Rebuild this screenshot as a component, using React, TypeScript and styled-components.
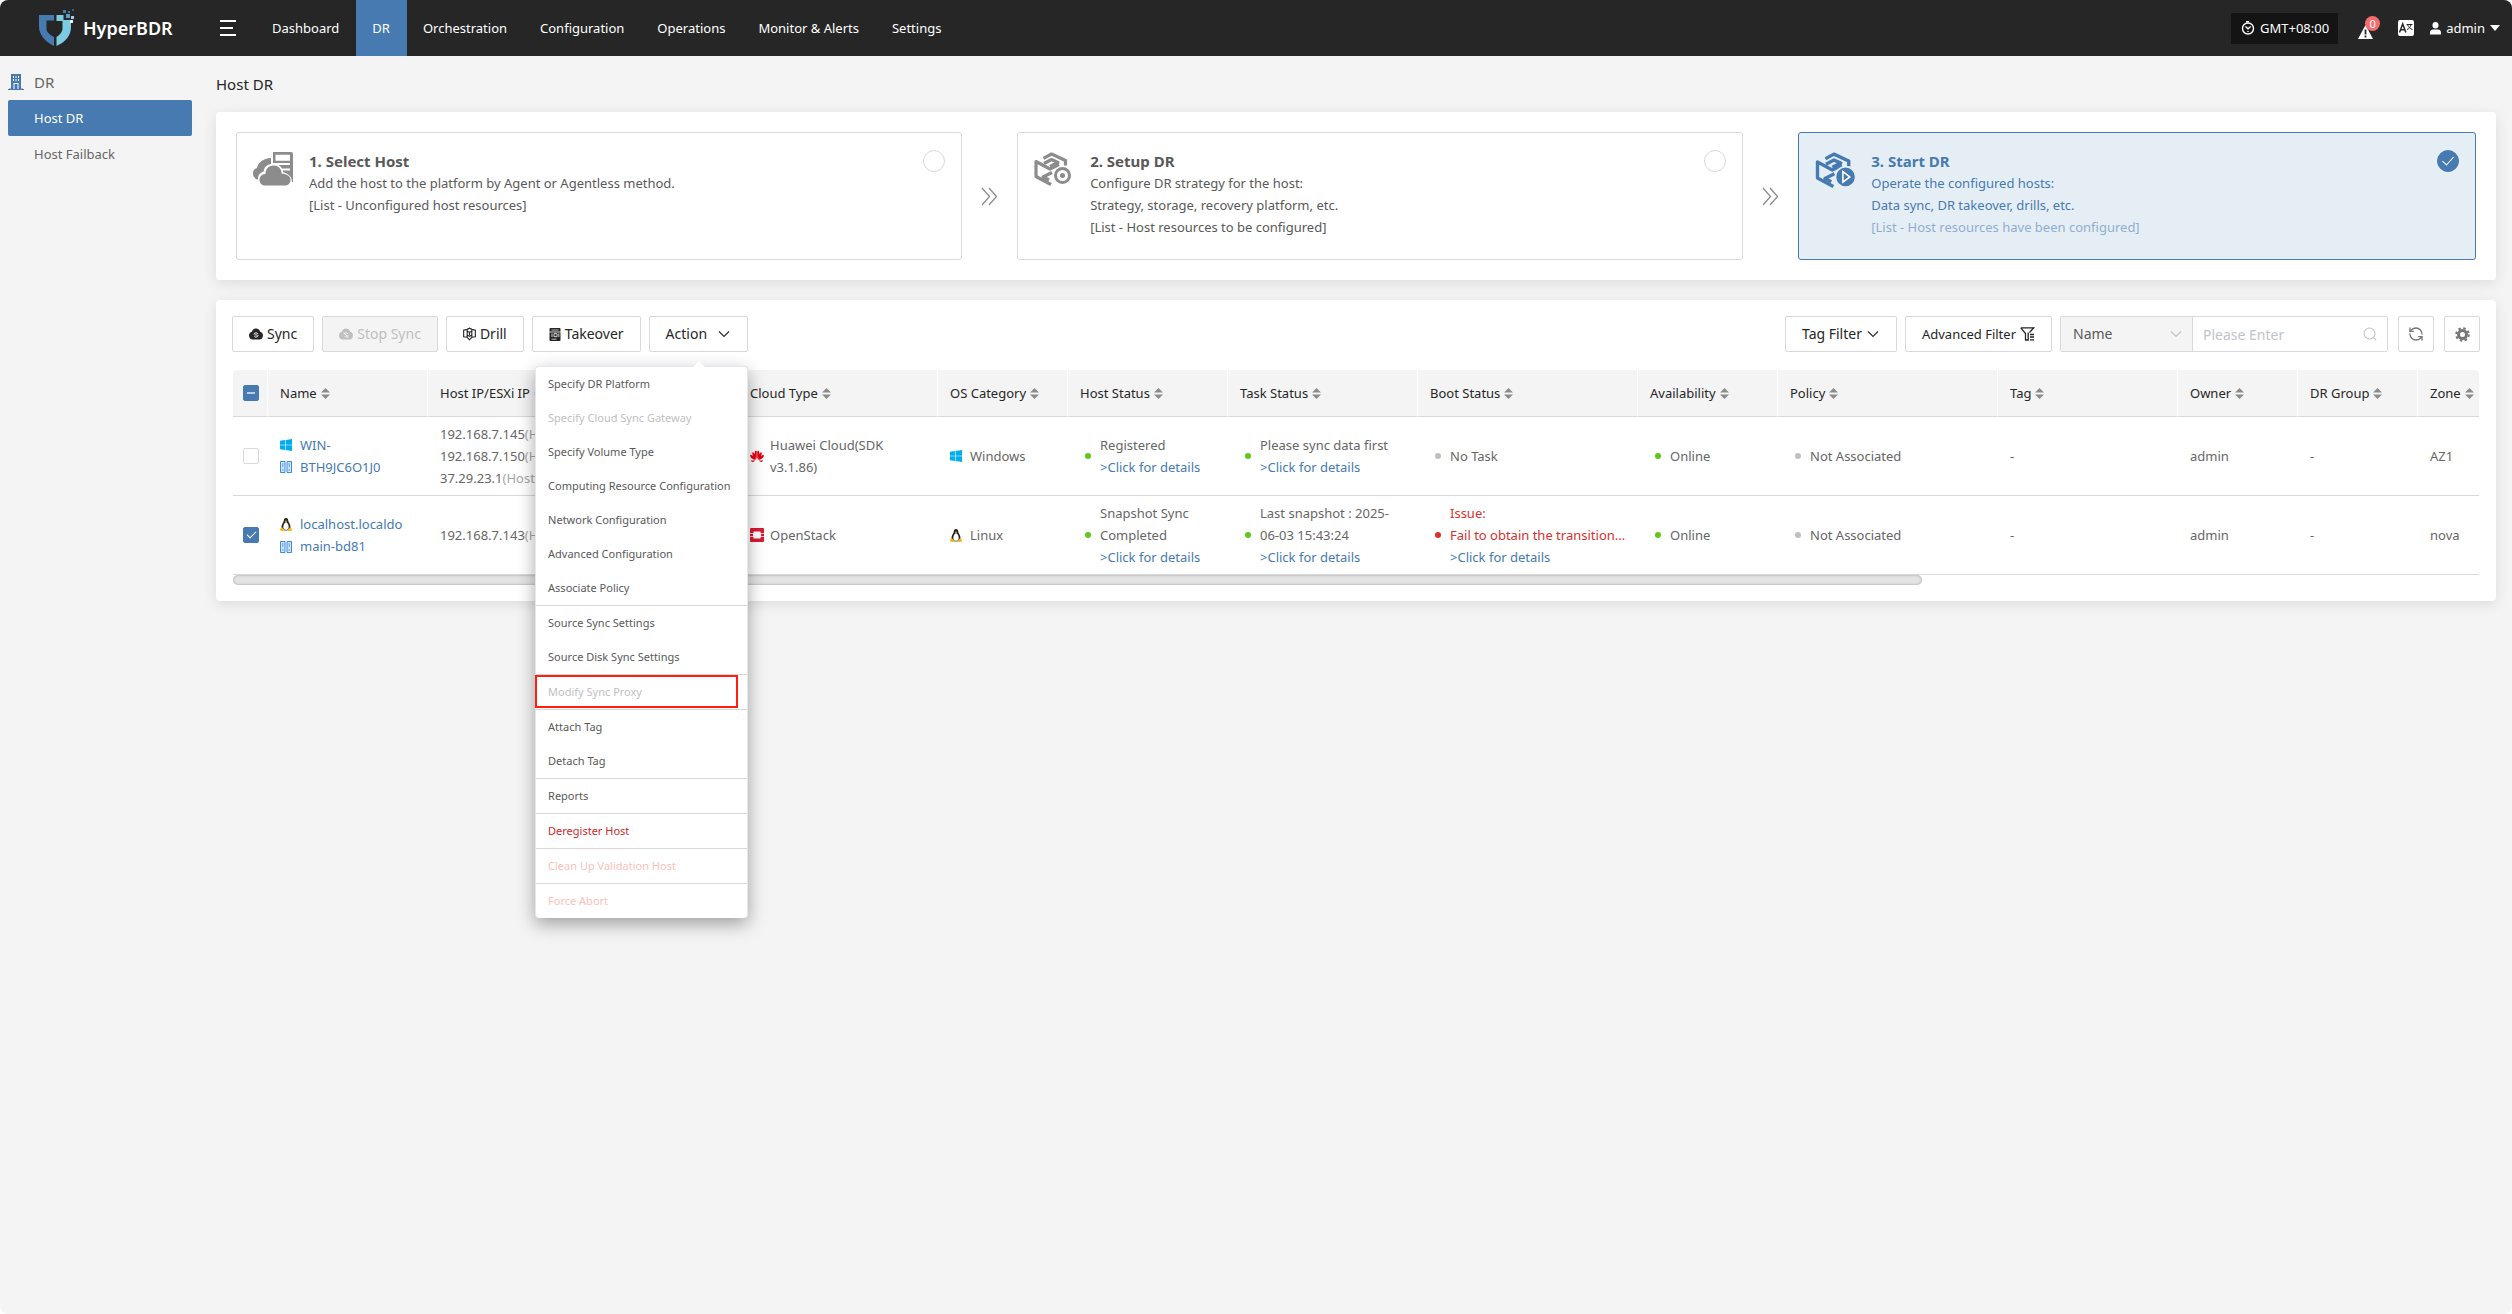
import React from "react";
import styled, { createGlobalStyle, css } from "styled-components";
import { RefreshCcw } from "lucide-react";

const accent = "#467ab1";
const line = "#d9d9d9";
const font = '"Noto Sans", "Open Sans", "Liberation Sans", sans-serif';

const GlobalStyle = createGlobalStyle`
  *, *::before, *::after { box-sizing: border-box; }
  body { margin: 0; background: #fff; font: 13px/22px ${font}; color: #595959; }
  button, input, select { font: inherit; color: inherit; }
  a { text-decoration: none; color: ${accent}; }
  svg { display: block; flex: none; }
`;

/* ---------- icons ---------- */

const LogoMark = () => (
  <svg width="36" height="38" viewBox="0 0 36 38">
    <path d="M0 6h15v5.500H7.500v8C7.500 23 10 25 15 28v9C6 33 0 25 0 18z" fill="#467ab1" />
    <path d="M17.500 6h7v5h7.500v7c0 8-5 15-14.500 19v-9c4.500-3 6-6 6-9v-7h-6z" fill="#7ccbe2" />
    <rect x="24" y="1" width="3" height="3" fill="#467ab1" />
    <rect x="27" y="5" width="4" height="4" fill="#5a9bd0" />
    <rect x="29" y="2" width="2" height="2" fill="#467ab1" />
    <rect x="32" y="7" width="3" height="3" fill="#a9c9e4" />
    <rect x="31" y="11" width="3" height="3" fill="#e6f1f8" />
    <rect x="33" y="0" width="2" height="2" fill="#345f8c" />
  </svg>
);

const MenuBars = () => (
  <svg width="16" height="16" viewBox="0 0 16 16" fill="#fff">
    <path d="M0 0h16v2H0zM0 7h13v2H0zM0 14h16v2H0z" />
  </svg>
);

const ClockIcon = () => (
  <svg width="14" height="14" viewBox="0 0 14 14" fill="none" stroke="#fff" strokeWidth="1.400">
    <circle cx="7" cy="7.500" r="5.500" />
    <path d="M5 .7h3M4.500 5.500 7 7.800l2.700-2.300M7 10v1" />
  </svg>
);

const AlertIcon = () => (
  <svg width="15" height="14" viewBox="0 0 15 14">
    <path d="M7.500 0 15 14H0z" fill="#fff" />
    <path d="M6.600 4.500h1.800v5H6.600zM6.600 10.600h1.800v1.800H6.600z" fill="#262626" />
  </svg>
);

const TranslateIcon = () => (
  <svg width="16" height="16" viewBox="0 0 16 16">
    <rect width="16" height="16" rx="2" fill="#fff" />
    <path d="M1.500 12.500 4.700 4l3.200 8.500M2.700 9.800h4" stroke="#262626" strokeWidth="1.500" fill="none" />
    <path d="M8.500 4.500h6M9 9.500c2-.7 3.500-2.500 4-5M9.700 5c.8 2.200 2.300 3.800 4.800 4.500" stroke="#262626" fill="none" />
  </svg>
);

const UserIcon = () => (
  <svg width="11" height="13" viewBox="0 0 11 13" fill="#fff">
    <rect x="2.500" y="0" width="6" height="6.500" rx="3" />
    <path d="M0 12.500V10.500C0 8.500 1.500 7.500 3 7.500h5c1.500 0 3 1 3 3v2z" />
  </svg>
);

const CaretDown = () => (
  <svg width="10" height="6" viewBox="0 0 10 6" fill="#fff">
    <path d="M0 0h10L5 6z" />
  </svg>
);

const BuildingIcon = () => (
  <svg width="16" height="16" viewBox="0 0 16 16">
    <path d="M3 0h10v15H3z" fill={accent} />
    <path d="M0 15h16v1H0z" fill={accent} />
    <path d="M1 14h2v1H1zM13 14h2v1h-2z" fill="#a3bcd6" />
    <path d="M5 2h1v2H5zM7.500 2h1v2h-1zM10 2h1v2h-1zM5 5h1v2H5zM7.500 5h1v2h-1zM10 5h1v2h-1zM5.500 9h1v6h-1zM9.500 9h1v6h-1zM5.500 9h5v1h-5z" fill="#fff" />
  </svg>
);

const HostIcon = () => (
  <svg width="40" height="34" viewBox="0 0 40 34" fill="#8c8c8c">
    <path d="M20 0h18a2 2 0 0 1 2 2v28h-1c0-4-2-7-5.500-8.500L30 20v-1.500h7v-2h-8c-.8-1.500-2-2.800-3.500-3.500H37v-2H20V2zM22.500 2.800v6h14.500v-6z" fillRule="evenodd" />
    <path d="M18 6v6c-5 1-7 4-7.300 7.500C6.500 20.800 5 23.500 5 27.500 2 27 0 24.500 0 21.500c0-2.800 1.500-4.800 4-5.500C5 10.500 10 6.500 18 6z" />
    <path d="M20.500 13.500c5 0 8 3.500 8.200 8.300 4.800-.1 8.800 2.200 8.800 6.200 0 3.500-2.500 5.500-6 5.500h-19c-3.500 0-6-2-6-5.500 0-3.500 2.500-5.800 6-6 .3-5 3-8.500 8-8.500z" />
  </svg>
);

const BoxOutline = () => (
  <g fill="none" strokeWidth="3.200" strokeLinejoin="round">
    <path d="M9.500 6.300 17.500 2 31.500 8.500v5" />
    <path d="M10 11.500 17.500 7.500l6.500 3-8 4" />
    <path d="M17 32.500 2 24.500V9.500l14 7.500 9-4.500" />
    <path d="m18 20.500-9 4.500 6 3" />
  </g>
);

const SetupIcon = () => (
  <svg width="38" height="34" viewBox="0 0 38 34" stroke="#8c8c8c">
    <BoxOutline />
    <circle cx="28.500" cy="23.500" r="9.500" fill="#fff" stroke="none" />
    <circle cx="28.500" cy="23.500" r="7" fill="#fff" strokeWidth="3" />
    <circle cx="28.500" cy="23.500" r="2.500" fill="#8c8c8c" stroke="none" />
  </svg>
);

const StartIcon = () => (
  <svg width="41" height="36" viewBox="0 0 38 34" stroke={accent}>
    <BoxOutline />
    <circle cx="28.500" cy="23.500" r="9.500" fill={accent} stroke="#e6eef5" strokeWidth="1.500" />
    <path d="M26 18.500v10l6.500-5z" fill={accent} stroke="#fff" strokeWidth="1.500" />
  </svg>
);

const DoubleArrow = () => (
  <svg width="17" height="19" viewBox="0 0 17 19" fill="none" stroke="#8c8c8c" strokeWidth="1.300">
    <path d="m1 1 7.500 8.500L1 18M8 1l7.500 8.500L8 18" />
  </svg>
);

const SyncIcon = ({ stop }: { stop?: boolean }) => (
  <svg width="14" height="12" viewBox="0 0 15 12">
    <path d="M7.500 0c2.400 0 4 1.600 4.400 3.700C13.800 4.200 15 5.600 15 7.700c0 2.500-1.700 4.300-4 4.300H4c-2.300 0-4-1.800-4-4.300 0-2.100 1.200-3.500 3.100-4C3.500 1.600 5.100 0 7.500 0z" fill="currentColor" />
    <circle cx="7.500" cy="7" r="2.300" fill="none" stroke={stop ? "#f4f4f4" : "#fff"} strokeDasharray="5 2" />
    {stop ? <path d="m5 4 5 6" stroke="#f4f4f4" /> : <path d="M6 7h3" stroke="#fff" />}
  </svg>
);

const DrillIcon = () => (
  <svg width="13" height="14" viewBox="0 0 14 14" fill="none" stroke="currentColor" strokeWidth="1.200">
    <path d="M4.500 10.500.7 10V3l3.800-1L7 .8 9.500 2l3.800 1v7l-3.800.5L7 13.200zM4.500 2v8.500M9.500 2v8.500M4.500 4 7 5.200 9.500 4M7 5.200v3M4.500 8.200 7 9.500l2.500-1.300" />
  </svg>
);

const TakeoverIcon = () => (
  <svg width="12" height="13" viewBox="0 0 12 13">
    <path d="M1.500 0h9a1 1 0 0 1 1 1v11a1 1 0 0 1-1 1h-9a1 1 0 0 1-1-1V1a1 1 0 0 1 1-1z" fill="currentColor" />
    <path d="M2.500 2h7M2.500 11.200h5" stroke="#fff" strokeWidth=".7" />
    <path d="M0 4h12M3 5.500v3.500M5 5.700h3v3H5zM9.800 5.500v3.500" stroke="#fff" strokeWidth=".8" fill="none" />
  </svg>
);

const Chevron = () => (
  <svg width="14" height="14" viewBox="0 0 14 14" fill="none" stroke="currentColor" strokeWidth="1.100">
    <path d="m2 4.500 5 5 5-5" />
  </svg>
);

const FunnelIcon = () => (
  <svg width="15" height="14" viewBox="0 0 15 14" fill="none" stroke="currentColor" strokeWidth="1.300">
    <path d="M.8.8h13L9.500 5.500M.8.800 5.500 6.500v6.500h2.700V5.500M10 7.500h4M10 10h4M10 12.800h4" />
  </svg>
);

const SearchIcon = () => (
  <svg width="14" height="14" viewBox="0 0 14 14" fill="none" stroke="#c0c4cc" strokeWidth="1.100">
    <circle cx="6.500" cy="6.500" r="5.500" />
    <path d="m10.500 10.500 2.700 2.700" />
  </svg>
);

const GearIcon = () => (
  <svg width="15" height="15" viewBox="0 0 15 15">
    <g stroke="#777" fill="none">
      <circle cx="7.500" cy="7.500" r="4" strokeWidth="3" />
      <circle cx="7.500" cy="7.500" r="6.300" strokeWidth="2" strokeDasharray="2.500 2.450" />
    </g>
  </svg>
);

const SortIcon = () => (
  <svg width="9" height="11" viewBox="0 0 9 11" fill="#8c8c8c">
    <path d="M4.500 0 9 4.500H0zM0 6.500h9L4.500 11z" />
  </svg>
);

const WindowsIcon = () => (
  <svg width="12" height="12" viewBox="0 0 12 12" fill="#00adef">
    <path d="M0 1.700 5 1v4.700H0zM5.600.9 12 0v5.700H5.600zM0 6.300h5V11l-5-.7zM5.600 6.300H12V12l-6.400-.9z" />
  </svg>
);

const LinuxIcon = () => (
  <svg width="12" height="13" viewBox="0 0 12 13">
    <path d="M6 0c1.600 0 2.200 1.200 2.200 2.600 0 1.700 2.300 3.600 2.300 6.400 0 2.400-2 3.500-4.500 3.500S1.500 11.400 1.500 9c0-2.800 2.300-4.700 2.300-6.400C3.800 1.200 4.400 0 6 0z" fill="#222" />
    <path d="M6 4.300c1.200 0 2.700 2.700 2.700 4.700S7.500 11.800 6 11.800 3.300 11 3.300 9 4.800 4.300 6 4.300z" fill="#fff" />
    <path d="M4.800 3 6 2.500 7.200 3 6 4.300zM1.700 9l2.500 2.500c.5 1-.4 1.600-1.500 1.400L.3 12.400c-.6-.3 0-.9 0-1.600 0-.6.900-.6 1.400-1.800zM10.300 9l-2.500 2.500c-.5 1 .4 1.600 1.500 1.400l2.400-.5c.6-.3 0-.9 0-1.600 0-.6-.9-.6-1.400-1.800z" fill="#f5b50a" />
  </svg>
);

const ServerIcon = () => (
  <svg width="12" height="12" viewBox="0 0 12 12">
    <path d="M.5.500h4.500v11H.5zM7 .5h4.500v11H7z" fill="#d3e6fb" stroke="#3c8ae0" />
    <path d="M2 3h1.500M2 5h1.500M8.500 3H10M8.500 5H10M2 9h1.500M8.500 9H10" stroke="#3c8ae0" />
  </svg>
);

const HuaweiIcon = () => (
  <svg width="14" height="12" viewBox="0 0 14 12" fill="#e60012">
    <path d="M6.700 9.500C5.200 6.500 4 3 5.300.8 6.300.300 6.800 1 6.800 2.200zM7.300 9.500C8.800 6.500 10 3 8.700.8 7.700.300 7.200 1 7.200 2.200zM6.100 9.700C3.500 7.800 1.700 5 2.500 2.200 4.500 2 5.300 5.200 6.100 9.700zM7.900 9.700c2.600-1.900 4.400-4.700 3.600-7.500C9.500 2 8.700 5.200 7.900 9.700zM5.600 10C3 9.400-.3 7.700.3 4.700 2.200 4.600 4.200 6.800 5.600 10zM8.400 10c2.600-.6 5.900-2.300 5.300-5.300C11.800 4.600 9.800 6.800 8.400 10zM5.300 10.500H.600c1 1.900 3.200 1.900 4.700 0zM8.700 10.500h4.700c-1 1.900-3.200 1.900-4.700 0z" />
  </svg>
);

const OpenStackIcon = () => (
  <svg width="14" height="14" viewBox="0 0 14 14" fill="#da1a32">
    <path d="M1 0h12a1 1 0 0 1 1 1v4h-3.500V3.500h-7V5H0V1a1 1 0 0 1 1-1zM0 9h3.500v1.500h7V9H14v4a1 1 0 0 1-1 1H1a1 1 0 0 1-1-1zM0 5.700h3v2.600H0zM11 5.700h3v2.600h-3z" />
  </svg>
);

/* ---------- shell ---------- */

const Shell = styled.div`
  display: flex;
  flex-direction: column;
  min-height: 100vh;
  background: #f4f4f4;
  border-radius: 8px;
  overflow: hidden;
`;

const TopBar = styled.header`
  display: flex;
  align-items: center;
  height: 56px;
  padding: 0 12px 0 39px;
  background: #262626;
  color: #fff;
`;

const Brand = styled.a`
  display: flex;
  align-items: center;
  gap: 8px;
  width: 181px;
  font-size: 18px;
  font-weight: 600;
  color: #fff;
`;

const PlainButton = styled.button`
  display: flex;
  align-items: center;
  gap: 5px;
  padding: 0;
  border: 0;
  background: none;
  cursor: pointer;
`;

const Nav = styled.nav`
  display: flex;
  flex: 1;
  margin-left: 20px;
`;

const NavLink = styled.a<{ $active?: boolean }>`
  padding: 0 17px 0 16px;
  line-height: 56px;
  color: #fff;
  background: ${(p) => (p.$active ? accent : "none")};
`;

const TopTools = styled.div`
  display: flex;
  align-items: center;
`;

const TimeZone = styled(PlainButton)`
  height: 31px;
  padding: 0 9px 0 10px;
  margin-right: 20px;
  background: #141414;
`;

const AlertButton = styled(PlainButton)`
  position: relative;
  padding-top: 8px;
  margin-right: 25px;
`;

const Badge = styled.span`
  position: absolute;
  top: -1px;
  left: 7px;
  width: 15px;
  height: 15px;
  border-radius: 8px;
  background: #f56c6c;
  font-size: 11px;
  line-height: 15px;
  text-align: center;
`;

const LangButton = styled(PlainButton)`
  margin-right: 16px;
`;

const Body = styled.div`
  display: flex;
  flex: 1;
`;

const Sidebar = styled.aside`
  width: 200px;
  padding: 12px 8px;
`;

const SideTitle = styled.h2`
  display: flex;
  align-items: center;
  gap: 10px;
  height: 28px;
  margin: 0 0 4px;
  font-size: 15px;
  font-weight: 400;
  color: #666;
`;

const SideLink = styled.a<{ $active?: boolean }>`
  display: block;
  padding-left: 26px;
  line-height: 36px;
  border-radius: 2px;
  color: ${(p) => (p.$active ? "#fff" : "#666")};
  background: ${(p) => (p.$active ? accent : "none")};
`;

const Main = styled.main`
  flex: 1;
  min-width: 0;
  padding: 0 16px 16px;
`;

const PageTitle = styled.h1`
  margin: 0;
  font-size: 15px;
  font-weight: 400;
  line-height: 56px;
  color: #262626;
`;

const Panel = styled.section`
  border-radius: 4px;
  background: #fff;
  box-shadow: 0 3px 14px rgba(0, 0, 0, 0.1);
  margin-bottom: 20px;
`;

/* ---------- steps ---------- */

const Steps = styled(Panel)`
  display: grid;
  grid-template-columns: 15fr 55px 15fr 55px 14fr;
  padding: 20px;
`;

const StepArrow = styled.div`
  display: grid;
  place-items: center;
`;

const StepCard = styled.label<{ $active?: boolean }>`
  display: flex;
  gap: 16px;
  min-height: 128px;
  padding: 17px 16px;
  border: 1px solid ${(p) => (p.$active ? accent : line)};
  border-radius: 3px;
  background: ${(p) => (p.$active ? "#e6eef5" : "#fff")};
  color: ${(p) => (p.$active ? accent : "#595959")};
`;

const StepIcon = styled.span`
  width: 40px;
  padding-top: 2px;
`;

const StepText = styled.span`
  display: flex;
  flex: 1;
  flex-direction: column;
`;

const StepTitle = styled.strong`
  font-size: 15px;
  font-weight: 700;
`;

const StepNote = styled.span<{ $faded?: boolean }>`
  opacity: ${(p) => (p.$faded ? 0.55 : 1)};
`;

const StepRadio = styled.input`
  appearance: none;
  position: relative;
  flex: none;
  width: 22px;
  height: 22px;
  margin: 0;
  border: 1px solid ${line};
  border-radius: 50%;
  background: #fff;
  &:checked {
    border-color: ${accent};
    background: ${accent};
  }
  &:checked::after {
    content: "";
    position: absolute;
    left: 7px;
    top: 3px;
    width: 6px;
    height: 11px;
    border: solid #fff;
    border-width: 0 1px 1px 0;
    transform: rotate(42deg);
  }
`;

/* ---------- toolbar ---------- */

const ListPanel = styled(Panel)`
  padding: 16px;
`;

const Toolbar = styled.div`
  display: flex;
  justify-content: space-between;
  margin-bottom: 18px;
  font-size: 14px;
`;

const ToolGroup = styled.div<{ $gap?: number }>`
  display: flex;
  gap: ${(p) => p.$gap ?? 8}px;
`;

const ToolButton = styled.button<{ $gap?: number; $small?: boolean }>`
  display: flex;
  align-items: center;
  gap: ${(p) => p.$gap ?? 4}px;
  height: 36px;
  padding: 0 16px;
  border: 1px solid ${line};
  border-radius: 2px;
  background: #fff;
  color: #262626;
  font-size: ${(p) => (p.$small ? 13 : 14)}px;
  &:disabled {
    background: #f4f4f4;
    color: #bfbfbf;
  }
`;

const SquareButton = styled(ToolButton)`
  justify-content: center;
  width: 36px;
  padding: 0;
`;

const SearchBox = styled.div`
  display: flex;
  height: 36px;
  border: 1px solid ${line};
  border-radius: 2px;
`;

const FieldWrap = styled.div`
  display: flex;
  align-items: center;
  position: relative;
  color: #c0c4cc;
`;

const FieldIcon = styled.span`
  position: absolute;
  right: 10px;
  pointer-events: none;
`;

const NameSelect = styled.select`
  appearance: none;
  width: 132px;
  height: 34px;
  padding: 0 12px;
  border: 0;
  border-right: 1px solid ${line};
  border-radius: 0;
  background: #f4f4f4;
  color: #595959;
`;

const SearchInput = styled.input`
  width: 194px;
  height: 34px;
  padding: 0 10px;
  border: 0;
  background: #fff;
  &::placeholder {
    color: #c0c4cc;
  }
`;

/* ---------- action menu ---------- */

const MenuAnchor = styled.div`
  position: relative;
`;

const Menu = styled.div`
  position: absolute;
  z-index: 2;
  top: 50px;
  right: 0;
  width: 213px;
  border: 1px solid #e4e7ed;
  border-bottom: 0;
  border-radius: 4px;
  background: #fff;
  box-shadow: 0 6px 18px rgba(0, 0, 0, 0.35);
  font-size: 11px;
  &::before {
    content: "";
    position: absolute;
    top: -6px;
    right: 42px;
    border: solid transparent;
    border-width: 0 6px 6px;
    border-bottom-color: #fff;
  }
`;

type Tone = "normal" | "off" | "danger" | "dangerOff";
const tones: Record<Tone, string> = {
  normal: "#595959",
  off: "#bfbfbf",
  danger: "#cf2a2a",
  dangerOff: "#fcc0bb",
};

const MenuItem = styled.button<{ $tone: Tone; $divided?: boolean; $marked?: boolean }>`
  position: relative;
  display: block;
  width: 100%;
  height: ${(p) => (p.$divided ? 35 : 34)}px;
  padding: 0 12px;
  border: 0;
  border-top: ${(p) => (p.$divided ? `1px solid ${line}` : "0")};
  background: none;
  color: ${(p) => tones[p.$tone]};
  text-align: left;
  white-space: nowrap;
  ${(p) =>
    p.$marked &&
    css`
      &::after {
        content: "";
        position: absolute;
        inset: 0 9px 1px -1px;
        border: 2px solid #ff1e10;
      }
    `}
`;

/* ---------- table ---------- */

const TableArea = styled.div`
  padding: 0 1px;
`;

const Grid = styled.table`
  width: 100%;
  table-layout: fixed;
  border-collapse: separate;
  border-spacing: 0;
`;

const Th = styled.th`
  padding: 12px;
  border-right: 1px solid #fff;
  border-bottom: 1px solid ${line};
  background: #f4f4f4;
  color: #262626;
  font-weight: 400;
  text-align: left;
  white-space: nowrap;
  &:first-child {
    padding: 12px 8px 12px 10px;
    border-top-left-radius: 4px;
  }
  &:last-child {
    border-right: 0;
    border-top-right-radius: 4px;
  }
`;

const ThLabel = styled.span`
  display: flex;
  align-items: center;
  gap: 4px;
`;

const Td = styled.td`
  height: 79px;
  padding: 6px 12px;
  border-bottom: 1px solid ${line};
  color: #666;
  white-space: nowrap;
  &:first-child {
    padding: 6px 8px 6px 10px;
  }
`;

const Check = styled.input`
  appearance: none;
  display: block;
  position: relative;
  width: 16px;
  height: 16px;
  margin: 0;
  border: 1px solid ${line};
  border-radius: 2px;
  background: #fff;
  &:checked,
  &:indeterminate {
    border-color: ${accent};
    background: ${accent};
  }
  &:checked::after {
    content: "";
    position: absolute;
    left: 5px;
    top: 1px;
    width: 5px;
    height: 9px;
    border: solid #fff;
    border-width: 0 1px 1px 0;
    transform: rotate(45deg);
  }
  &:indeterminate::after {
    content: "";
    position: absolute;
    left: 3px;
    right: 3px;
    top: 6px;
    height: 2px;
    background: #b9cde1;
  }
`;

const WithIcon = styled.span<{ $gap?: number }>`
  display: flex;
  align-items: center;
  gap: ${(p) => p.$gap ?? 8}px;
`;

const IconStack = styled.span`
  display: flex;
  flex-direction: column;
  align-items: center;
  gap: 10px;
`;

const Stack = styled.span`
  display: flex;
  flex-direction: column;
`;

const Muted = styled.span`
  color: #a6a6a6;
`;

const Status = styled.span<{ $color: string; $alert?: boolean }>`
  display: flex;
  align-items: center;
  gap: 9px;
  padding-left: 5px;
  color: ${(p) => (p.$alert ? p.$color : "inherit")};
  &::before {
    content: "";
    flex: none;
    width: 6px;
    height: 6px;
    border-radius: 50%;
    background: ${(p) => p.$color};
  }
`;

const ScrollTrack = styled.div`
  height: 10px;
`;

const ScrollThumb = styled.div`
  width: 75.2%;
  height: 10px;
  border-radius: 5px;
  background: #e4e4e4;
  box-shadow: inset 0 0 3px rgba(0, 0, 0, 0.3);
`;

/* ---------- data ---------- */

const green = "#61c713";
const grey = "#bfbfbf";
const red = "#d93030";

const navItems = ["Dashboard", "DR", "Orchestration", "Configuration", "Operations", "Monitor & Alerts", "Settings"];

const columns: [string, number?][] = [
  ["Name", 160],
  ["Host IP/ESXi IP", 310],
  ["Cloud Type", 200],
  ["OS Category", 130],
  ["Host Status", 160],
  ["Task Status", 190],
  ["Boot Status", 220],
  ["Availability", 140],
  ["Policy", 220],
  ["Tag", 180],
  ["Owner", 120],
  ["DR Group", 120],
  ["Zone"],
];

const hosts = [
  {
    id: "win",
    name: ["WIN-", "BTH9JC6O1J0"],
    OsIcon: WindowsIcon,
    os: "Windows",
    ips: ["192.168.7.145", "192.168.7.150", "37.29.23.1"],
    CloudIcon: HuaweiIcon,
    cloud: ["Huawei Cloud(SDK", "v3.1.86)"],
    host: ["Registered"],
    task: ["Please sync data first"],
    boot: { lines: ["No Task"], issue: false },
    zone: "AZ1",
    selected: false,
  },
  {
    id: "linux",
    name: ["localhost.localdo", "main-bd81"],
    OsIcon: LinuxIcon,
    os: "Linux",
    ips: ["192.168.7.143"],
    CloudIcon: OpenStackIcon,
    cloud: ["OpenStack"],
    host: ["Snapshot Sync", "Completed"],
    task: ["Last snapshot : 2025-", "06-03 15:43:24"],
    boot: { lines: ["Issue:", "Fail to obtain the transition..."], issue: true },
    zone: "nova",
    selected: true,
  },
];

const menuItems: { label: string; tone?: Tone; divided?: boolean; marked?: boolean }[] = [
  { label: "Specify DR Platform" },
  { label: "Specify Cloud Sync Gateway", tone: "off" },
  { label: "Specify Volume Type" },
  { label: "Computing Resource Configuration" },
  { label: "Network Configuration" },
  { label: "Advanced Configuration" },
  { label: "Associate Policy" },
  { label: "Source Sync Settings", divided: true },
  { label: "Source Disk Sync Settings" },
  { label: "Modify Sync Proxy", tone: "off", divided: true, marked: true },
  { label: "Attach Tag", divided: true },
  { label: "Detach Tag" },
  { label: "Reports", divided: true },
  { label: "Deregister Host", tone: "danger", divided: true },
  { label: "Clean Up Validation Host", tone: "dangerOff", divided: true },
  { label: "Force Abort", tone: "dangerOff", divided: true },
];

const Lines = ({ items, link }: { items: string[]; link?: boolean }) => (
  <Stack>
    {items.map((t) => (
      <span key={t}>{t}</span>
    ))}
    {link && <a href="#details">&gt;Click for details</a>}
  </Stack>
);

const Step = ({ icon, title, lines, active }: { icon: React.ReactNode; title: string; lines: string[]; active?: boolean }) => (
  <StepCard $active={active}>
    <StepIcon>{icon}</StepIcon>
    <StepText>
      <StepTitle>{title}</StepTitle>
      {lines.map((t, i) => (
        <StepNote key={t} $faded={active && i === lines.length - 1}>
          {t}
        </StepNote>
      ))}
    </StepText>
    <StepRadio type="radio" name="step" defaultChecked={active} />
  </StepCard>
);

export default function App() {
  return (
    <Shell>
      <GlobalStyle />
      <TopBar>
        <Brand href="#home">
          <LogoMark />
          HyperBDR
        </Brand>
        <PlainButton aria-label="Toggle menu">
          <MenuBars />
        </PlainButton>
        <Nav>
          {navItems.map((t) => (
            <NavLink key={t} href="#nav" $active={t === "DR"}>
              {t}
            </NavLink>
          ))}
        </Nav>
        <TopTools>
          <TimeZone>
            <ClockIcon />
            GMT+08:00
          </TimeZone>
          <AlertButton aria-label="Alerts">
            <AlertIcon />
            <Badge>0</Badge>
          </AlertButton>
          <LangButton aria-label="Language">
            <TranslateIcon />
          </LangButton>
          <PlainButton>
            <UserIcon />
            admin
            <CaretDown />
          </PlainButton>
        </TopTools>
      </TopBar>

      <Body>
        <Sidebar>
          <SideTitle>
            <BuildingIcon />
            DR
          </SideTitle>
          <SideLink href="#host-dr" $active>
            Host DR
          </SideLink>
          <SideLink href="#host-failback">Host Failback</SideLink>
        </Sidebar>

        <Main>
          <PageTitle>Host DR</PageTitle>

          <Steps>
            <Step
              icon={<HostIcon />}
              title="1. Select Host"
              lines={["Add the host to the platform by Agent or Agentless method.", "[List - Unconfigured host resources]"]}
            />
            <StepArrow>
              <DoubleArrow />
            </StepArrow>
            <Step
              icon={<SetupIcon />}
              title="2. Setup DR"
              lines={["Configure DR strategy for the host:", "Strategy, storage, recovery platform, etc.", "[List - Host resources to be configured]"]}
            />
            <StepArrow>
              <DoubleArrow />
            </StepArrow>
            <Step
              active
              icon={<StartIcon />}
              title="3. Start DR"
              lines={["Operate the configured hosts:", "Data sync, DR takeover, drills, etc.", "[List - Host resources have been configured]"]}
            />
          </Steps>

          <ListPanel>
            <Toolbar>
              <ToolGroup>
                <ToolButton>
                  <SyncIcon />
                  Sync
                </ToolButton>
                <ToolButton disabled>
                  <SyncIcon stop />
                  Stop Sync
                </ToolButton>
                <ToolButton>
                  <DrillIcon />
                  Drill
                </ToolButton>
                <ToolButton>
                  <TakeoverIcon />
                  Takeover
                </ToolButton>
                <MenuAnchor>
                  <ToolButton $gap={10}>
                    Action
                    <Chevron />
                  </ToolButton>
                  <Menu role="menu">
                    {menuItems.map((m) => (
                      <MenuItem
                        key={m.label}
                        role="menuitem"
                        disabled={m.tone === "off" || m.tone === "dangerOff"}
                        $tone={m.tone ?? "normal"}
                        $divided={m.divided}
                        $marked={m.marked}
                      >
                        {m.label}
                      </MenuItem>
                    ))}
                  </Menu>
                </MenuAnchor>
              </ToolGroup>
              <ToolGroup $gap={10}>
                <ToolGroup>
                  <ToolButton>
                    Tag Filter
                    <Chevron />
                  </ToolButton>
                  <ToolButton $small>
                    Advanced Filter
                    <FunnelIcon />
                  </ToolButton>
                  <SearchBox>
                    <FieldWrap>
                      <NameSelect aria-label="Search field">
                        <option>Name</option>
                      </NameSelect>
                      <FieldIcon>
                        <Chevron />
                      </FieldIcon>
                    </FieldWrap>
                    <FieldWrap>
                      <SearchInput aria-label="Search" placeholder="Please Enter" />
                      <FieldIcon>
                        <SearchIcon />
                      </FieldIcon>
                    </FieldWrap>
                  </SearchBox>
                </ToolGroup>
                <SquareButton aria-label="Refresh">
                  <RefreshCcw size={16} strokeWidth={2} color="#777" />
                </SquareButton>
                <SquareButton aria-label="Table settings">
                  <GearIcon />
                </SquareButton>
              </ToolGroup>
            </Toolbar>

            <TableArea>
              <Grid>
                <colgroup>
                  <col width={35} />
                  {columns.map(([label, w]) => (
                    <col key={label} width={w} />
                  ))}
                </colgroup>
                <thead>
                  <tr>
                    <Th>
                      <Check
                        type="checkbox"
                        aria-label="Select all"
                        ref={(el: HTMLInputElement | null) => {
                          if (el) el.indeterminate = true;
                        }}
                      />
                    </Th>
                    {columns.map(([label]) => (
                      <Th key={label}>
                        <ThLabel>
                          {label}
                          <SortIcon />
                        </ThLabel>
                      </Th>
                    ))}
                  </tr>
                </thead>
                <tbody>
                  {hosts.map((h) => (
                    <tr key={h.id}>
                      <Td>
                        <Check type="checkbox" aria-label={`Select ${h.name.join("")}`} defaultChecked={h.selected} />
                      </Td>
                      <Td>
                        <WithIcon>
                          <IconStack>
                            <h.OsIcon />
                            <ServerIcon />
                          </IconStack>
                          <a href="#host">
                            <Lines items={h.name} />
                          </a>
                        </WithIcon>
                      </Td>
                      <Td>
                        <Stack>
                          {h.ips.map((ip) => (
                            <span key={ip}>
                              {ip}
                              <Muted>(Host IP)</Muted>
                            </span>
                          ))}
                        </Stack>
                      </Td>
                      <Td>
                        <WithIcon $gap={6}>
                          <h.CloudIcon />
                          <Lines items={h.cloud} />
                        </WithIcon>
                      </Td>
                      <Td>
                        <WithIcon>
                          <h.OsIcon />
                          {h.os}
                        </WithIcon>
                      </Td>
                      <Td>
                        <Status $color={green}>
                          <Lines items={h.host} link />
                        </Status>
                      </Td>
                      <Td>
                        <Status $color={green}>
                          <Lines items={h.task} link />
                        </Status>
                      </Td>
                      <Td>
                        <Status $color={h.boot.issue ? red : grey} $alert={h.boot.issue}>
                          <Lines items={h.boot.lines} link={h.boot.issue} />
                        </Status>
                      </Td>
                      <Td>
                        <Status $color={green}>Online</Status>
                      </Td>
                      <Td>
                        <Status $color={grey}>Not Associated</Status>
                      </Td>
                      <Td>-</Td>
                      <Td>admin</Td>
                      <Td>-</Td>
                      <Td>{h.zone}</Td>
                    </tr>
                  ))}
                </tbody>
              </Grid>
              <ScrollTrack>
                <ScrollThumb />
              </ScrollTrack>
            </TableArea>
          </ListPanel>
        </Main>
      </Body>
    </Shell>
  );
}
